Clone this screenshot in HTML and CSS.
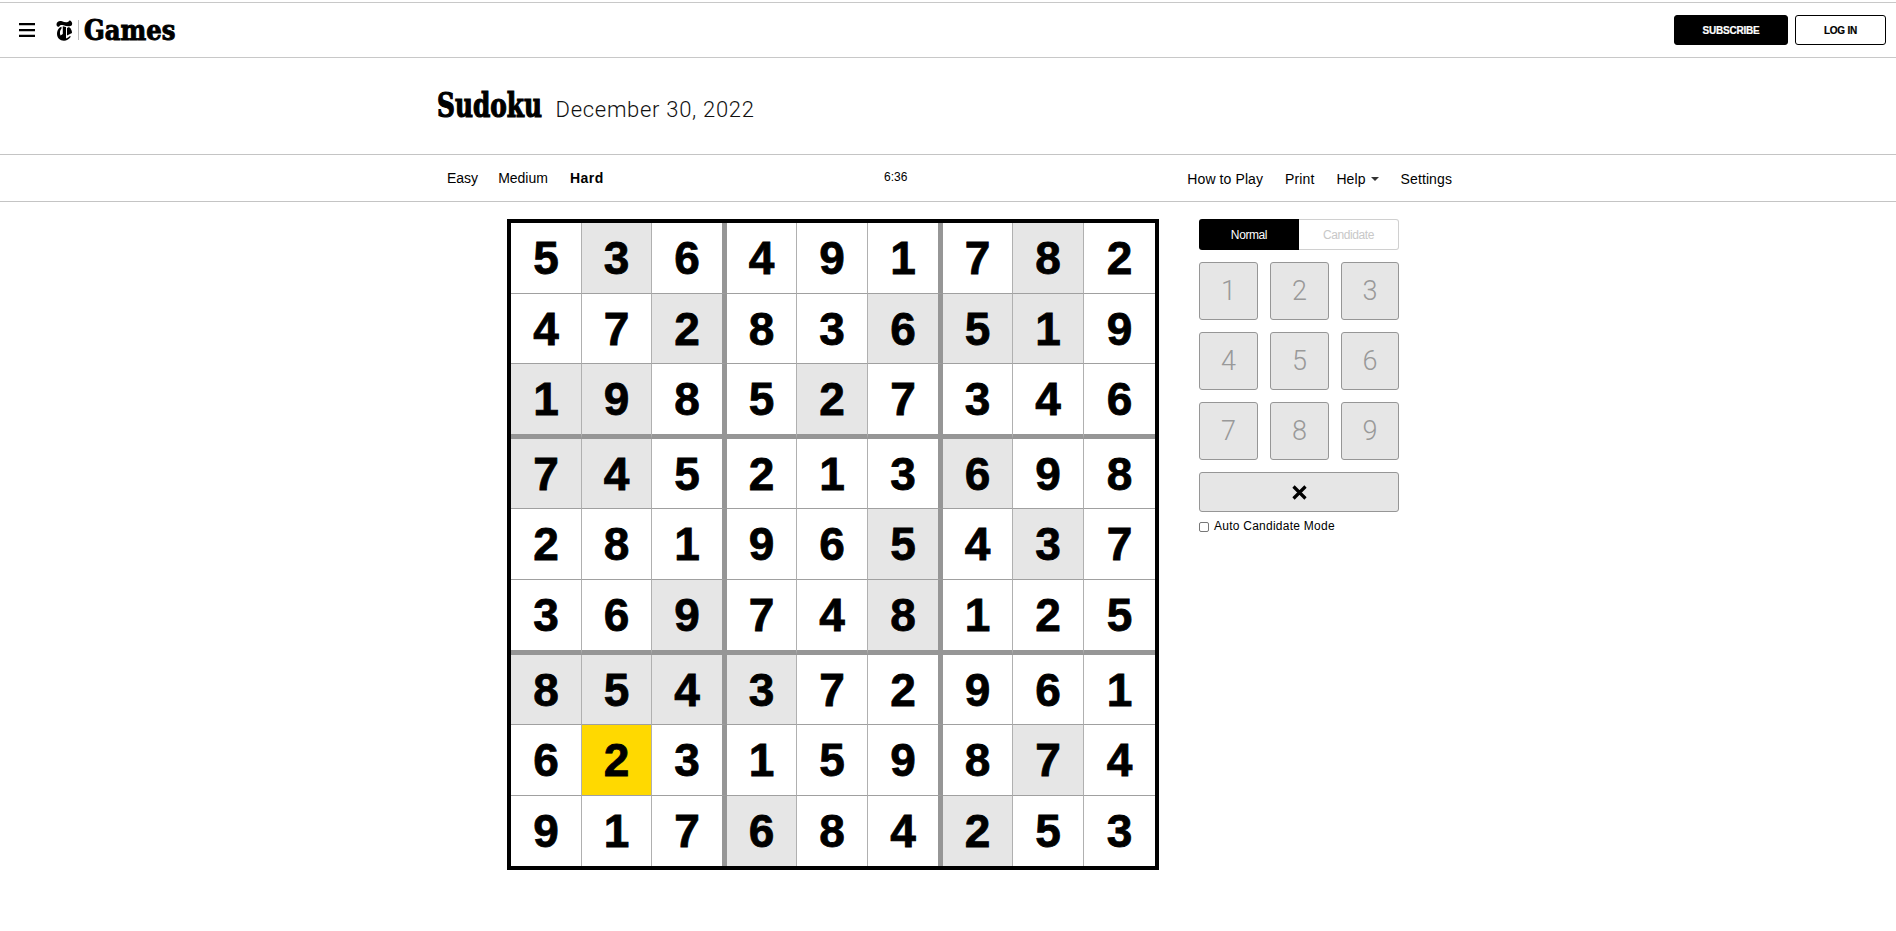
FILE: index.html
```html
<!DOCTYPE html>
<html lang="en">
<head>
<meta charset="utf-8">
<title>Sudoku</title>
<link rel="stylesheet" href="styles.css">
</head>
<body>
<header class="topbar">
  <div class="brand">
    <svg class="burger" width="16" height="14" viewBox="0 0 16 14"><path d="M0 0h16v2.300H0zM0 6h16v2.300H0zM0 11.700h16v2.300H0z"/></svg>
    <svg class="tlogo" width="17" height="21" viewBox="0 0 17 21"><path d="M.5 4.500C.5 1.800 3.300 .3 6 1.300 9 2.500 12 3 13.800 .2 15.800 1.200 16.800 3.300 15.800 5.200 13.800 7 10.500 6.300 7.500 5.300 5.500 4.600 3.800 4.800 3 6.800 1.500 6.800 .5 6 .5 4.500Z"/><path d="M3.800 7.500 5.500 6.800V8.500C3.800 10 3.500 13.500 4.500 15.500L6.800 14V6.200L10 7V18.500C11.500 18 12.800 17.200 14 16L14.800 16.800C12.800 19.300 10.500 20.800 8 20.800 3.800 20.800 1 17.800 1 13.800 1 11.300 2 9 3.800 7.500Z"/><path d="M11 8 13 7C15 8.500 16 10.800 16 13L11 15.500Z"/></svg>
    <span class="sep"></span>
    <span class="games">Games</span>
  </div>
  <div class="account">
    <a class="btn btn-dark">SUBSCRIBE</a>
    <a class="btn btn-light">LOG IN</a>
  </div>
</header>
<section class="titlebar">
  <div class="wrap title-row">
    <h1 class="title">Sudoku</h1>
    <span class="date">December 30, 2022</span>
  </div>
</section>
<nav class="navbar">
  <div class="wrap nav-row">
    <div class="levels">
      <a>Easy</a>
      <a>Medium</a>
      <a class="active">Hard</a>
    </div>
    <div class="timer">6:36</div>
    <div class="tools">
      <a>How to Play</a>
      <a>Print</a>
      <a class="help">Help<span class="caret"></span></a>
      <a>Settings</a>
    </div>
  </div>
</nav>
<main class="wrap game">
  <div class="board">
    <div class="cell">5</div><div class="cell gray">3</div><div class="cell">6</div><div class="cell">4</div><div class="cell">9</div><div class="cell">1</div><div class="cell">7</div><div class="cell gray">8</div><div class="cell">2</div>
    <div class="cell">4</div><div class="cell">7</div><div class="cell gray">2</div><div class="cell">8</div><div class="cell">3</div><div class="cell gray">6</div><div class="cell gray">5</div><div class="cell gray">1</div><div class="cell">9</div>
    <div class="cell gray">1</div><div class="cell gray">9</div><div class="cell">8</div><div class="cell">5</div><div class="cell gray">2</div><div class="cell">7</div><div class="cell">3</div><div class="cell">4</div><div class="cell">6</div>
    <div class="cell gray">7</div><div class="cell gray">4</div><div class="cell">5</div><div class="cell">2</div><div class="cell">1</div><div class="cell">3</div><div class="cell gray">6</div><div class="cell">9</div><div class="cell">8</div>
    <div class="cell">2</div><div class="cell">8</div><div class="cell">1</div><div class="cell">9</div><div class="cell">6</div><div class="cell gray">5</div><div class="cell">4</div><div class="cell gray">3</div><div class="cell">7</div>
    <div class="cell">3</div><div class="cell">6</div><div class="cell gray">9</div><div class="cell">7</div><div class="cell">4</div><div class="cell gray">8</div><div class="cell">1</div><div class="cell">2</div><div class="cell">5</div>
    <div class="cell gray">8</div><div class="cell gray">5</div><div class="cell gray">4</div><div class="cell gray">3</div><div class="cell">7</div><div class="cell">2</div><div class="cell">9</div><div class="cell">6</div><div class="cell">1</div>
    <div class="cell">6</div><div class="cell selected">2</div><div class="cell">3</div><div class="cell">1</div><div class="cell">5</div><div class="cell">9</div><div class="cell">8</div><div class="cell gray">7</div><div class="cell">4</div>
    <div class="cell">9</div><div class="cell">1</div><div class="cell">7</div><div class="cell gray">6</div><div class="cell">8</div><div class="cell">4</div><div class="cell gray">2</div><div class="cell">5</div><div class="cell">3</div>
  </div>
  <aside class="panel">
    <div class="mode">
      <div class="mode-on">Normal</div>
      <div class="mode-off">Candidate</div>
    </div>
    <div class="keys">
      <div class="key">1</div><div class="key">2</div><div class="key">3</div>
      <div class="key">4</div><div class="key">5</div><div class="key">6</div>
      <div class="key">7</div><div class="key">8</div><div class="key">9</div>
    </div>
    <div class="erase">
      <svg width="15" height="15" viewBox="0 0 15 15"><path d="M1.500 1.500 13.500 13.500M13.500 1.500 1.500 13.500" stroke="#000" stroke-width="3.200" fill="none"/></svg>
    </div>
    <label class="auto"><span class="box"></span>Auto Candidate Mode</label>
  </aside>
</main>
</body>
</html>
```

FILE: styles.css
```css
* { box-sizing: border-box; }
html, body { margin: 0; padding: 0; background: #fff; color: #000; }
body { font-family: "Liberation Sans", Arial, sans-serif; height: 931px; overflow: hidden; padding-top: 2px; }
a { color: inherit; text-decoration: none; }

.topbar {
  height: 56px;
  border-top: 1px solid #c8c8c8;
  border-bottom: 1px solid #c8c8c8;
  display: flex;
  align-items: center;
  justify-content: space-between;
  padding: 0 10px 0 19px;
}
.brand { display: flex; align-items: center; }
.burger { margin-right: 21px; }
.tlogo { margin-right: 5px; }
.sep { width: 1px; height: 20px; background: #bbb; margin-right: 5px; }
.games {
  font-family: "DejaVu Serif Condensed", "DejaVu Serif", serif;
  font-weight: 700;
  font-size: 27px;
  line-height: 30px;
  margin-top: 2px;
  -webkit-text-stroke: 0.9px #000;
}
.account { display: flex; gap: 7px; }
.btn {
  height: 30px;
  border-radius: 3px;
  border: 1px solid #000;
  display: flex;
  align-items: center;
  justify-content: center;
  font-size: 10px;
  font-weight: 700;
  letter-spacing: -0.2px;
  -webkit-text-stroke: 0.2px currentColor;
}
.btn-dark { width: 114px; background: #000; color: #fff; }
.btn-light { width: 91px; background: #fff; }

.wrap { width: 1022px; margin: 0 auto; }

.titlebar { height: 97px; border-bottom: 1px solid #c4c4c4; }
.title-row { display: flex; align-items: baseline; padding-top: 27px; }
.title {
  margin: 0 -11px 0 0;
  font-family: "DejaVu Serif Condensed", "DejaVu Serif", serif;
  font-weight: 700;
  font-size: 34px;
  line-height: 40px;
  -webkit-text-stroke: 1.2px #000;
  transform: scaleX(0.81);
  transform-origin: left center;
}
.date {
  font-family: Roboto, "Liberation Sans", sans-serif;
  font-weight: 300;
  font-size: 22px;
  letter-spacing: 0.7px;
  color: #111;
}

.navbar { height: 47px; border-bottom: 1px solid #c4c4c4; }
.nav-row {
  height: 46px;
  display: grid;
  grid-template-columns: 447px 24px 544px;
  align-items: center;
  font-size: 14px;
}
.levels { display: flex; gap: 20px; padding-left: 10px; margin-top: -1px; }
.levels .active { font-weight: 700; margin-left: 2px; letter-spacing: 0.5px; }
.timer { font-size: 12px; margin-top: -3px; white-space: nowrap; }
.tools { display: flex; justify-content: flex-end; gap: 22px; margin-top: 1px; letter-spacing: 0.1px; }
.help { display: flex; align-items: center; }
.caret {
  width: 0; height: 0;
  margin-left: 5px;
  border-left: 4px solid transparent;
  border-right: 4px solid transparent;
  border-top: 4px solid #333;
}

.game { display: flex; align-items: flex-start; padding: 17px 0 0 70px; }
.board {
  width: 652px;
  height: 651px;
  border: 4px solid #000;
  display: grid;
  grid-template-columns: 71px 70px 75px 70px 71px 75px 70px 71px 71px;
  grid-template-rows: 71px 70px 75px 70px 71px 75px 70px 71px 70px;
  flex: none;
}
.cell {
  display: flex;
  align-items: center;
  justify-content: center;
  border-right: 1px solid #b0b0b0;
  border-bottom: 1px solid #a0a0a0;
  font-size: 46px;
  font-weight: 700;
  -webkit-text-stroke: 0.8px #000;
  line-height: 1;
}
.cell:nth-child(3n) { border-right: 5px solid #969696; }
.cell:nth-child(9n) { border-right: 0; }
.cell:nth-child(n+19):nth-child(-n+27),
.cell:nth-child(n+46):nth-child(-n+54) { border-bottom: 5px solid #969696; }
.cell:nth-child(n+73) { border-bottom: 0; }
.gray { background: #e6e6e6; }
.selected { background: #ffd900; }

.panel { width: 200px; margin-left: 40px; flex: none; }
.mode { display: flex; height: 31px; font-size: 12px; }
.mode-on {
  width: 100px;
  background: #000;
  color: #fff;
  border-radius: 3px 0 0 3px;
  display: flex; align-items: center; justify-content: center;
  letter-spacing: -0.4px;
}
.mode-off {
  width: 100px;
  color: #c8c8c8;
  border: 1px solid #d0d0d0;
  border-left: 0;
  border-radius: 0 3px 3px 0;
  display: flex; align-items: center; justify-content: center;
  letter-spacing: -0.4px;
}
.keys {
  display: grid;
  grid-template-columns: 59px 59px 58px;
  grid-auto-rows: 58px;
  column-gap: 12px;
  row-gap: 12px;
  margin-top: 12px;
}
.key, .erase {
  background: #e6e6e6;
  border: 1px solid #969696;
  border-radius: 3px;
  display: flex; align-items: center; justify-content: center;
}
.key {
  font-family: Roboto, "Liberation Sans", sans-serif;
  font-weight: 300;
  font-size: 27px;
  color: #999;
}
.erase { height: 40px; margin-top: 12px; }
.auto { display: flex; align-items: center; margin-top: 7px; font-size: 12px; line-height: 14px; letter-spacing: 0.25px; }
.box {
  width: 10px; height: 10px;
  border: 1px solid #777;
  border-radius: 2px;
  background: #fff;
  margin: 2px 5px 0 0;
}
```
